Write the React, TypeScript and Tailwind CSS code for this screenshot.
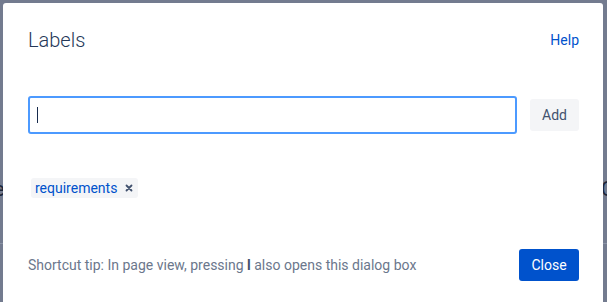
import React from "react";

export default function App() {
  return (
    <div
      className="relative w-[607px] h-[302px] overflow-hidden bg-[#737b8f] pl-[3px] pt-[3px]"
      style={{ fontFamily: 'Roboto, "Segoe UI", "Noto Sans", sans-serif' }}
    >
      {/* underlying page glimpses */}
      <span className="absolute left-[-6px] top-[174px] text-[20px] text-[#1d2638]">e</span>
      <span className="absolute left-[601px] top-[174px] text-[20px] text-[#1d2638]">C</span>
      <div className="absolute left-0 top-[243px] h-px w-[3px] bg-[#8b93a5]" />
      <div className="absolute left-[603px] top-[243px] h-px w-[4px] bg-[#8b93a5]" />

      <div className="relative flex h-[320px] w-[600px] flex-col rounded-[3px] bg-white pl-[25px] pr-[24px]">
        <div className="flex items-center justify-between pt-[25px]">
          <h1 className="text-[20px] font-light leading-[24px] text-[#253858]">Labels</h1>
          <a className="text-[14px] leading-[20px] text-[#0052cc]">Help</a>
        </div>

        <div className="mt-[44px] flex items-center gap-[13px]">
          <div className="flex h-[38px] flex-1 items-center rounded-[3px] border-2 border-[#4c9aff] bg-white pl-[7px]">
            <div className="h-[16px] w-px bg-[#172b4d]" />
          </div>
          <button className="h-[32px] w-[49px] rounded-[3px] bg-[#f4f5f7] text-[14px] text-[#42526e]">
            Add
          </button>
        </div>

        <div className="mt-[44px] flex">
          <span className="ml-[3px] flex h-[20px] items-center gap-[8px] rounded-[3px] bg-[#f4f5f7] pl-[4px] pr-[5px] text-[14px] text-[#0052cc]">
            requirements
            <svg width="8" height="8" viewBox="0 0 8 8">
              <path d="M1.5 1.5 L6.5 6.5 M6.5 1.5 L1.5 6.5" stroke="#42526e" strokeWidth="1.8" strokeLinecap="round" />
            </svg>
          </span>
        </div>

        <div className="mt-[51px] flex items-center justify-between">
          <p className="text-[14px] text-[#6b778c]">
            Shortcut tip: In page view, pressing <b className="text-[#42526e]">l</b> also opens this dialog box
          </p>
          <button className="h-[32px] w-[60px] rounded-[3px] bg-[#0052cc] text-[14px] text-white">
            Close
          </button>
        </div>
      </div>
    </div>
  );
}
